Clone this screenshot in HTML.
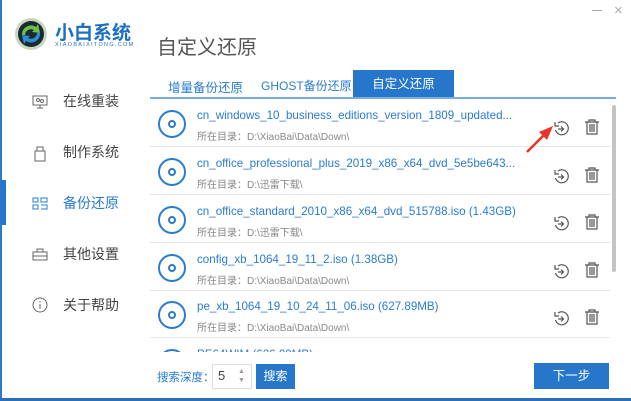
<!DOCTYPE html><html><head><meta charset="utf-8"><style>
*{margin:0;padding:0;box-sizing:border-box}
body{width:631px;height:401px;overflow:hidden;background:#fff;font-family:"Liberation Sans","Noto Sans CJK SC",sans-serif;position:relative}
.a{position:absolute}
.menu{left:63px;font-size:14px;color:#444;line-height:16px}
.row{position:absolute;left:150px;width:460px;height:47px;border-bottom:1px solid #e8e8e8}
.disc{position:absolute;left:8px;top:10px;width:28px;height:28px;border:2px solid #2a7bd0;border-radius:50%}
.disc:after{content:"";position:absolute;left:8px;top:8px;width:8px;height:8px;border:2px solid #2a7bd0;border-radius:50%;box-sizing:border-box}
.t{position:absolute;left:47px;top:9px;font-size:11.6px;color:#2a7bd0;white-space:nowrap}
.s{position:absolute;left:47px;top:28px;font-size:10px;color:#888;white-space:nowrap}
</style></head><body>
<div class="a" style="left:0;top:0;width:2px;height:401px;background:#2a7bd0"></div>
<div class="a" style="left:0;top:398px;width:631px;height:3px;background:#2a6fb8"></div>
<div class="a" style="left:0;top:180px;width:6px;height:45px;background:#2677cc"></div>
<svg class="a" style="left:14px;top:17px" width="34" height="34" viewBox="0 0 34 34"><circle cx="17" cy="17" r="16" fill="#c8d8c0"/><circle cx="17" cy="17" r="13" fill="#1a2a30"/><path d="M8 18a9 9 0 0 1 14-8l2-3 2 9-8-1 2-2a6 6 0 0 0-9 5z" fill="#6cc04a"/><path d="M26 16a9 9 0 0 1-14 8l-2 3-2-9 8 1-2 2a6 6 0 0 0 9-5z" fill="#2c8ed6"/></svg>
<div class="a" style="left:55px;top:18px;font-size:19px;font-weight:bold;color:#1d6fc4">小白系统</div>
<div class="a" style="left:55px;top:42px;font-size:5.5px;color:#1d6fc4;letter-spacing:1.3px">XIAOBAIXITONG.COM</div>
<div class="a" style="left:157px;top:31px;font-size:20px;color:#555">自定义还原</div>
<div class="a" style="left:592px;top:10px;width:10px;height:1px;background:#aaa"></div>
<div class="a" style="left:614px;top:2px;font-size:15px;color:#aaa">×</div>
<svg class="a" style="left:32px;top:95px" width="16" height="14"><rect x="1" y="1" width="14" height="9" fill="none" stroke="#666"/><path d="M8 10v3M5 13h6" stroke="#666"/><circle cx="6" cy="5" r="1.5" fill="none" stroke="#666"/><circle cx="10" cy="6" r="1.5" fill="none" stroke="#666"/></svg>
<div class="a menu" style="top:93px">在线重装</div>
<svg class="a" style="left:34px;top:146px" width="12" height="16"><rect x="3" y="1" width="6" height="4" fill="none" stroke="#666"/><rect x="1" y="5" width="10" height="10" fill="none" stroke="#666"/></svg>
<div class="a menu" style="top:144px">制作系统</div>
<svg class="a" style="left:32px;top:197px" width="16" height="14"><g fill="none" stroke="#2a7bd0"><rect x="1" y="1" width="5" height="4"/><rect x="1" y="8" width="5" height="4"/><rect x="9" y="1" width="6" height="4"/><path d="M9 8h6v4h-6"/></g></svg>
<div class="a menu" style="top:195px;color:#2a7bd0">备份还原</div>
<svg class="a" style="left:32px;top:248px" width="16" height="13"><g fill="none" stroke="#666"><rect x="1" y="4" width="14" height="8"/><path d="M5 4V1h6v3M1 8h14"/></g></svg>
<div class="a menu" style="top:246px">其他设置</div>
<svg class="a" style="left:32px;top:297px" width="16" height="16"><circle cx="8" cy="8" r="7" fill="none" stroke="#666"/><path d="M8 7v5M8 4v1.5" stroke="#666"/></svg>
<div class="a menu" style="top:297px">关于帮助</div>
<div class="a" style="left:168px;top:77px;font-size:12.5px;color:#2a7bd0">增量备份还原</div>
<div class="a" style="left:261px;top:77px;font-size:12px;color:#2a7bd0">GHOST备份还原</div>
<div class="a" style="left:353px;top:70px;width:101px;height:28px;background:#2677cc;color:#fff;font-size:12.5px;text-align:center;line-height:28px">自定义还原</div>
<div class="a" style="left:150px;top:97px;width:466px;height:2px;background:#7aaee0"></div>
<div style="position:absolute;left:0;top:99px;width:631px;height:253px;overflow:hidden">
<div class="row" style="top:1px"><div class="disc"></div><div class="t">cn_windows_10_business_editions_version_1809_updated...</div><div class="s">所在目录：D:\XiaoBai\Data\Down\</div></div>
<div class="row" style="top:49px"><div class="disc"></div><div class="t">cn_office_professional_plus_2019_x86_x64_dvd_5e5be643...</div><div class="s">所在目录：D:\迅雷下载\</div></div>
<div class="row" style="top:97px"><div class="disc"></div><div class="t">cn_office_standard_2010_x86_x64_dvd_515788.iso (1.43GB)</div><div class="s">所在目录：D:\迅雷下载\</div></div>
<div class="row" style="top:145px"><div class="disc"></div><div class="t">config_xb_1064_19_11_2.iso (1.38GB)</div><div class="s">所在目录：D:\XiaoBai\Data\Down\</div></div>
<div class="row" style="top:192px"><div class="disc"></div><div class="t">pe_xb_1064_19_10_24_11_06.iso (627.89MB)</div><div class="s">所在目录：D:\XiaoBai\Data\Down\</div></div>
<div class="row" style="top:240px"><div class="disc"></div><div class="t">PE64WIM (626.00MB)</div></div>
</div>
<svg width="0" height="0" style="position:absolute"><defs>
<g id="r"><path d="M5 3A6.5 6.5 0 1 1 2.5 10" fill="none" stroke="#555" stroke-width="1.2"/><path d="M2 2v4h4" fill="none" stroke="#555" stroke-width="1.2"/><path d="M5 9h5M8 6.5l2.5 2.5-2.5 2.5" fill="none" stroke="#555" stroke-width="1.2"/></g>
<g id="d"><path d="M1 3h14M5 3V1h6v2M3 3v12h10V3M6 5v8M8 5v8M10 5v8" fill="none" stroke="#555" stroke-width="1.2"/></g></defs></svg>
<svg class="a" style="left:553px;top:120px" width="16" height="16"><use href="#r"/></svg>
<svg class="a" style="left:584px;top:119px" width="16" height="16"><use href="#d"/></svg>
<svg class="a" style="left:553px;top:168px" width="16" height="16"><use href="#r"/></svg>
<svg class="a" style="left:584px;top:167px" width="16" height="16"><use href="#d"/></svg>
<svg class="a" style="left:553px;top:215px" width="16" height="16"><use href="#r"/></svg>
<svg class="a" style="left:584px;top:214px" width="16" height="16"><use href="#d"/></svg>
<svg class="a" style="left:553px;top:263px" width="16" height="16"><use href="#r"/></svg>
<svg class="a" style="left:584px;top:262px" width="16" height="16"><use href="#d"/></svg>
<svg class="a" style="left:553px;top:310px" width="16" height="16"><use href="#r"/></svg>
<svg class="a" style="left:584px;top:309px" width="16" height="16"><use href="#d"/></svg>
<svg class="a" style="left:525px;top:124px" width="30" height="30"><path d="M2 28L22 8" stroke="#e8322a" stroke-width="2.5"/><path d="M28 2L14 8l8 8z" fill="#e8322a"/></svg>
<div class="a" style="left:612px;top:105px;width:4px;height:167px;background:#c4c4c4;border-radius:2px"></div>
<div class="a" style="left:157px;top:369px;font-size:11.5px;color:#2a7bd0">搜索深度：</div>
<div class="a" style="left:212px;top:364px;width:40px;height:25px;border:1px solid #ddd;font-size:13px;color:#444;padding:3px 0 0 5px">5</div>
<div class="a" style="left:238px;top:367px;font-size:7px;color:#999;line-height:9px">▲<br>▼</div>
<div class="a" style="left:256px;top:364px;width:39px;height:25px;background:#2677cc;color:#fff;font-size:12px;text-align:center;line-height:25px">搜索</div>
<div class="a" style="left:534px;top:363px;width:75px;height:26px;background:#2677cc;color:#fff;font-size:12.5px;text-align:center;line-height:26px">下一步</div>
</body></html>
